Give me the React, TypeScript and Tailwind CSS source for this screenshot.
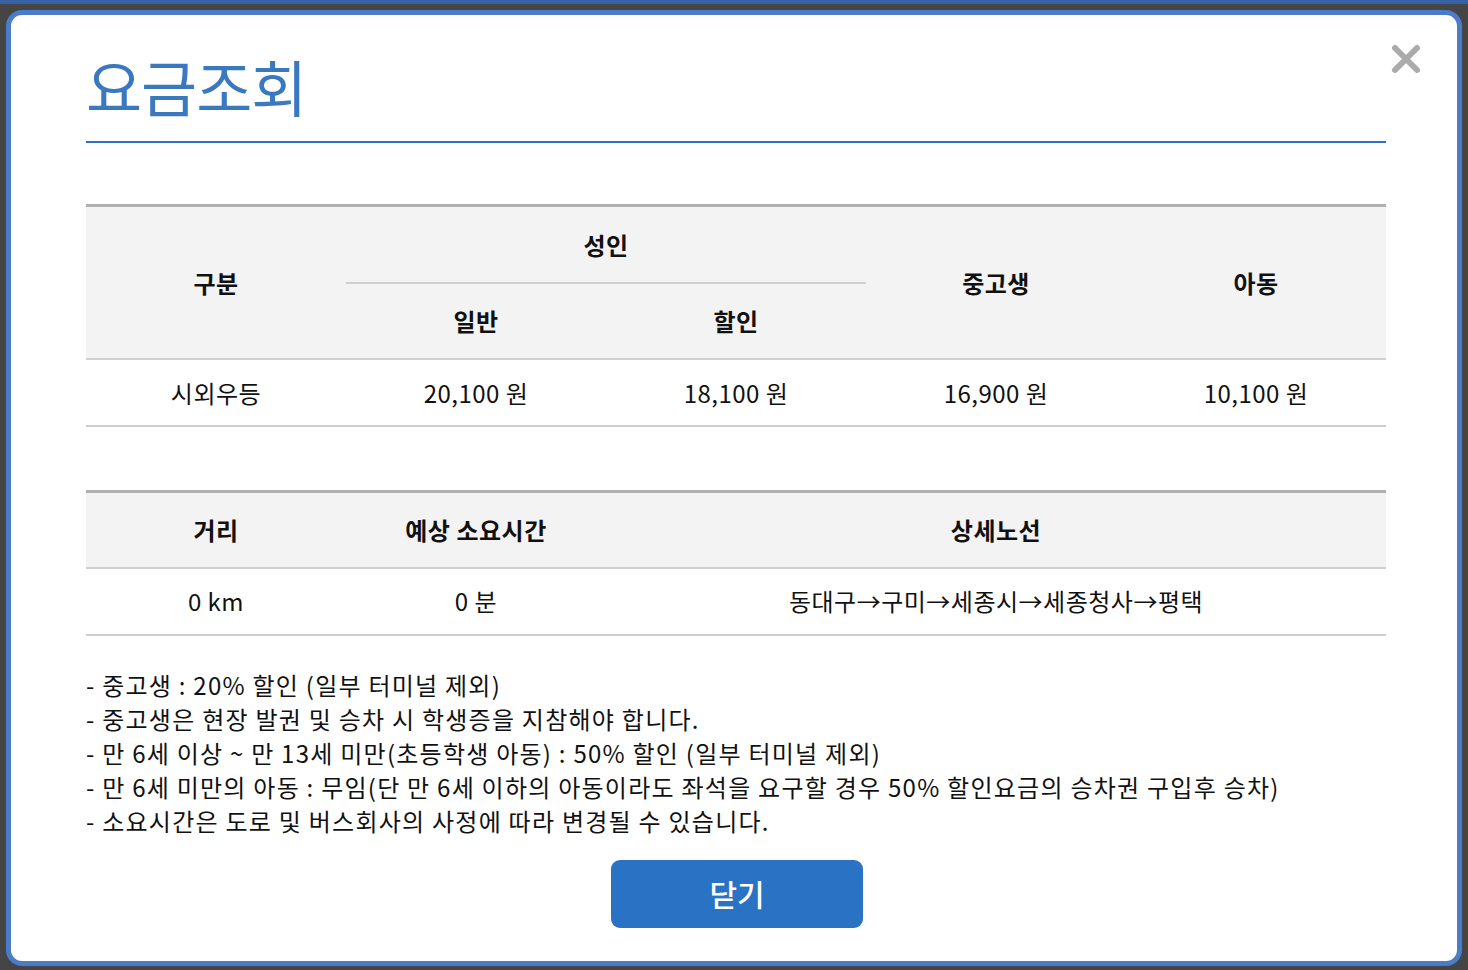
const font = { fontFamily: '"Noto Sans CJK KR", "Noto Sans", sans-serif' }

const fares = [
  { label: '시외우등', adult: '20,100 원', discount: '18,100 원', student: '16,900 원', child: '10,100 원' },
]

const notes = [
  '- 중고생 : 20% 할인 (일부 터미널 제외)',
  '- 중고생은 현장 발권 및 승차 시 학생증을 지참해야 합니다.',
  '- 만 6세 이상 ~ 만 13세 미만(초등학생 아동) : 50% 할인 (일부 터미널 제외)',
  '- 만 6세 미만의 아동 : 무임(단 만 6세 이하의 아동이라도 좌석을 요구할 경우 50% 할인요금의 승차권 구입후 승차)',
  '- 소요시간은 도로 및 버스회사의 사정에 따라 변경될 수 있습니다.',
]

export default function App() {
  return (
    <div
      className="h-[970px] w-[1468px] bg-[#454545] border-t-4 border-[#3562a6] pt-[6px] px-[6px] pb-[4px]"
      style={font}
    >
      <div className="relative h-full rounded-[16px] border-[5px] border-[#4a7cc8] bg-white pl-[75px] pr-[71px] text-[#111]">
        <button className="absolute right-[35px] top-[28px] text-[#ababab]">
          <svg width="32" height="32" viewBox="0 0 32 32">
            <path d="M5 5 L27 27 M27 5 L5 27" stroke="currentColor" strokeWidth="6" strokeLinecap="round" />
          </svg>
        </button>

        <div className="border-b-2 border-[#2c72c0] pt-[31px] pb-[15px]">
          <h1 className="text-[61px] leading-[80px] font-normal text-[#3a78c0] tracking-[-1px]">요금조회</h1>
        </div>

        <table className="mt-[61px] w-full border-collapse text-center text-[24px] tracking-[0.5px]">
          <thead className="bg-[#f3f3f3] font-bold">
            <tr className="border-t-[3px] border-[#b0b0b0]">
              <th rowSpan={2} className="w-[260px]">구분</th>
              <th colSpan={2} className="px-0">
                <div className="flex h-[75px] items-center justify-center">성인</div>
              </th>
              <th rowSpan={2} className="w-[260px]">중고생</th>
              <th rowSpan={2} className="w-[260px]">아동</th>
            </tr>
            <tr>
              <th className="h-[76px] w-[260px] border-t-2 border-[#cfcfcf]">일반</th>
              <th className="h-[76px] w-[260px] border-t-2 border-[#cfcfcf]">할인</th>
            </tr>
          </thead>
          <tbody>
            {fares.map(f => (
              <tr key={f.label} className="border-y-2 border-[#cfcfcf]">
                <td className="h-[67px]">{f.label}</td>
                <td>{f.adult}</td>
                <td>{f.discount}</td>
                <td>{f.student}</td>
                <td>{f.child}</td>
              </tr>
            ))}
          </tbody>
        </table>

        <table className="mt-[63px] w-full border-collapse text-center text-[24px] tracking-[0.5px]">
          <thead className="bg-[#f3f3f3] font-bold">
            <tr className="border-t-[3px] border-[#b0b0b0] border-b-2 border-b-[#cfcfcf]">
              <th className="h-[76px] w-[260px]">거리</th>
              <th className="w-[260px]">예상 소요시간</th>
              <th>상세노선</th>
            </tr>
          </thead>
          <tbody>
            <tr className="border-b-2 border-[#cfcfcf]">
              <td className="h-[67px]">0 km</td>
              <td>0 분</td>
              <td>동대구→구미→세종시→세종청사→평택</td>
            </tr>
          </tbody>
        </table>

        <ul className="mt-[32px] text-[24px] leading-[34px] tracking-[1.25px]">
          {notes.map(n => (
            <li key={n}>{n}</li>
          ))}
        </ul>

        <div className="mt-[22px] flex justify-center">
          <button className="ml-[2px] h-[68px] w-[252px] rounded-[9px] bg-[#2a72c4] text-[30px] font-medium text-white">
            닫기
          </button>
        </div>
      </div>
    </div>
  )
}
